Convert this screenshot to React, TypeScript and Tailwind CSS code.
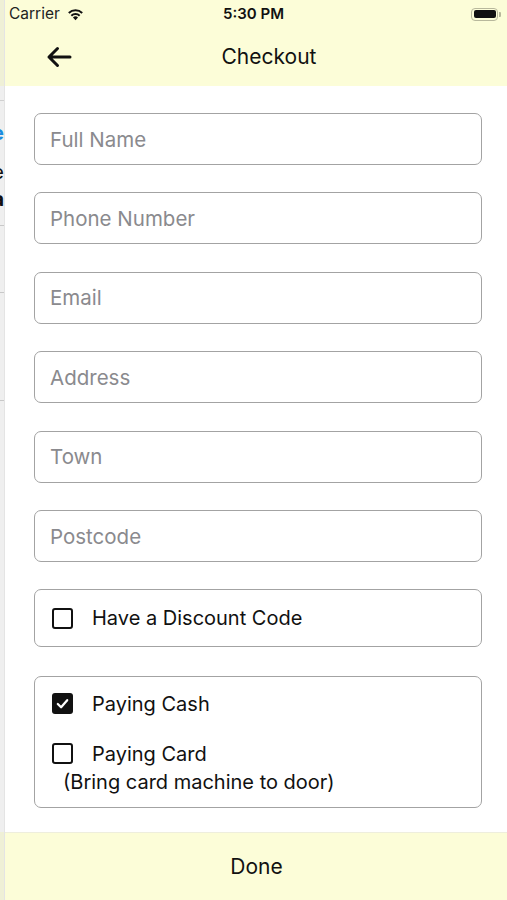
import React from "react";

const font = { fontFamily: "Inter, 'Noto Sans', sans-serif" };

function Field({ label }: { label: string }) {
  return (
    <div className="h-[52px] rounded-[7px] border-[1.5px] border-[#a3a3a3] flex items-center pl-[15px] pt-[2px] text-[20.5px] text-[#8a8a8e]">
      {label}
    </div>
  );
}

function Box({ checked }: { checked?: boolean }) {
  return checked ? (
    <div className="w-[21px] h-[21px] rounded-[3px] bg-[#111] flex items-center justify-center">
      <svg width="15" height="15" viewBox="0 0 16 16">
        <path d="M3 8.5 L6.5 12 L13 4.5" stroke="white" strokeWidth="2.4" fill="none" strokeLinecap="round" strokeLinejoin="round" />
      </svg>
    </div>
  ) : (
    <div className="w-[21px] h-[21px] rounded-[3px] border-[2px] border-[#111]" />
  );
}

export default function App() {
  return (
    <div className="w-[507px] h-[900px] relative overflow-hidden flex flex-col bg-white" style={font}>
      {/* header */}
      <div className="h-[86px] bg-[#fcfdd8] flex flex-col shrink-0">
        <div className="h-[28px] flex items-center justify-between pl-[9px] pr-[6px] relative">
          <div className="flex items-center gap-[6px] text-[15.5px] text-[#222]">
            <span>Carrier</span>
            <svg width="19" height="14" viewBox="0 0 18 13">
              <path d="M9 12.5 L6.6 9.7 A3.6 3.6 0 0 1 11.4 9.7 Z" fill="#111" />
              <path d="M4.4 7.4 A6.6 6.6 0 0 1 13.6 7.4 L12.3 8.8 A4.8 4.8 0 0 0 5.7 8.8 Z" fill="#111" />
              <path d="M2 4.9 A10 10 0 0 1 16 4.9 L14.7 6.3 A8.2 8.2 0 0 0 3.3 6.3 Z" fill="#111" />
            </svg>
          </div>
          <span className="absolute left-0 right-0 text-center text-[15px] font-semibold text-[#111] pointer-events-none">5:30 PM</span>
          <div className="flex items-center">
            <div className="w-[27px] h-[13px] rounded-[4px] border-[1.5px] border-[#b8b89c] p-[1.5px]">
              <div className="w-full h-full rounded-[2px] bg-[#111]" />
            </div>
            <div className="w-[2px] h-[5px] rounded-r-[1px] bg-[#b8b89c] ml-[1px]" />
          </div>
        </div>
        <div className="flex-1 flex items-center relative">
          <svg className="absolute left-[45px]" width="28" height="24" viewBox="0 0 28 24">
            <path d="M25 12 H4 M12.5 3.5 L4 12 L12.5 20.5" stroke="#111" strokeWidth="3" fill="none" strokeLinecap="round" strokeLinejoin="round" />
          </svg>
          <div className="flex-1 text-center pl-[31px] text-[21px] text-[#111]">Checkout</div>
        </div>
      </div>

      {/* content */}
      <div className="flex-1 flex flex-col pl-[34px] pr-[25px] pt-[27px] gap-[27.4px]">
        <Field label="Full Name" />
        <Field label="Phone Number" />
        <Field label="Email" />
        <Field label="Address" />
        <Field label="Town" />
        <Field label="Postcode" />
        <div className="h-[58px] rounded-[7px] border-[1.5px] border-[#a3a3a3] flex items-center pl-[17px] gap-[19px] text-[20px] text-[#111]">
          <Box />
          <span>Have a Discount Code</span>
        </div>
        <div className="h-[132px] mt-[1px] rounded-[7px] border-[1.5px] border-[#a3a3a3] flex flex-col pl-[17px] pt-[15px] text-[20px] text-[#111]">
          <div className="flex items-center gap-[19px] h-[24px]">
            <Box checked />
            <span>Paying Cash</span>
          </div>
          <div className="flex items-center gap-[19px] h-[24px] mt-[26px]">
            <Box />
            <span>Paying Card</span>
          </div>
          <div className="pl-[11px] mt-[2px] leading-[28px]">(Bring card machine to door)</div>
        </div>
      </div>

      {/* footer */}
      <div className="h-[68px] shrink-0 bg-[#fcfdd8] border-t border-[#eeeedd] flex items-center justify-center pl-[6px] text-[21px] text-[#111]">
        Done
      </div>

      {/* underlying screen edge */}
      <div className="absolute left-0 top-0 bottom-0 w-[5px] bg-[#efefef] border-r border-[#e4e4e4] overflow-hidden flex flex-col">
        <div className="h-[86px] bg-[#eff0d6] shrink-0" />
        <div className="h-[14px] shrink-0" />
        <div className="h-px bg-[#d0d0d0] shrink-0" />
        <div className="relative h-[124px] shrink-0">
          <span className="absolute right-0 top-[22px] text-[20px] leading-none font-bold text-[#1a8ce0]">e</span>
          <span className="absolute right-0 top-[61px] text-[20px] leading-none text-[#111]">e</span>
          <span className="absolute right-0 top-[88px] text-[20px] leading-none font-bold text-[#111]">a</span>
        </div>
        <div className="h-px bg-[#c8c8c8] shrink-0" />
        <div className="h-[66px] shrink-0" />
        <div className="h-px bg-[#c8c8c8] shrink-0" />
        <div className="h-[107px] shrink-0" />
        <div className="h-px bg-[#c8c8c8] shrink-0" />
        <div className="flex-1" />
        <div className="h-[68px] bg-[#eff0d6] shrink-0" />
      </div>
    </div>
  );
}
